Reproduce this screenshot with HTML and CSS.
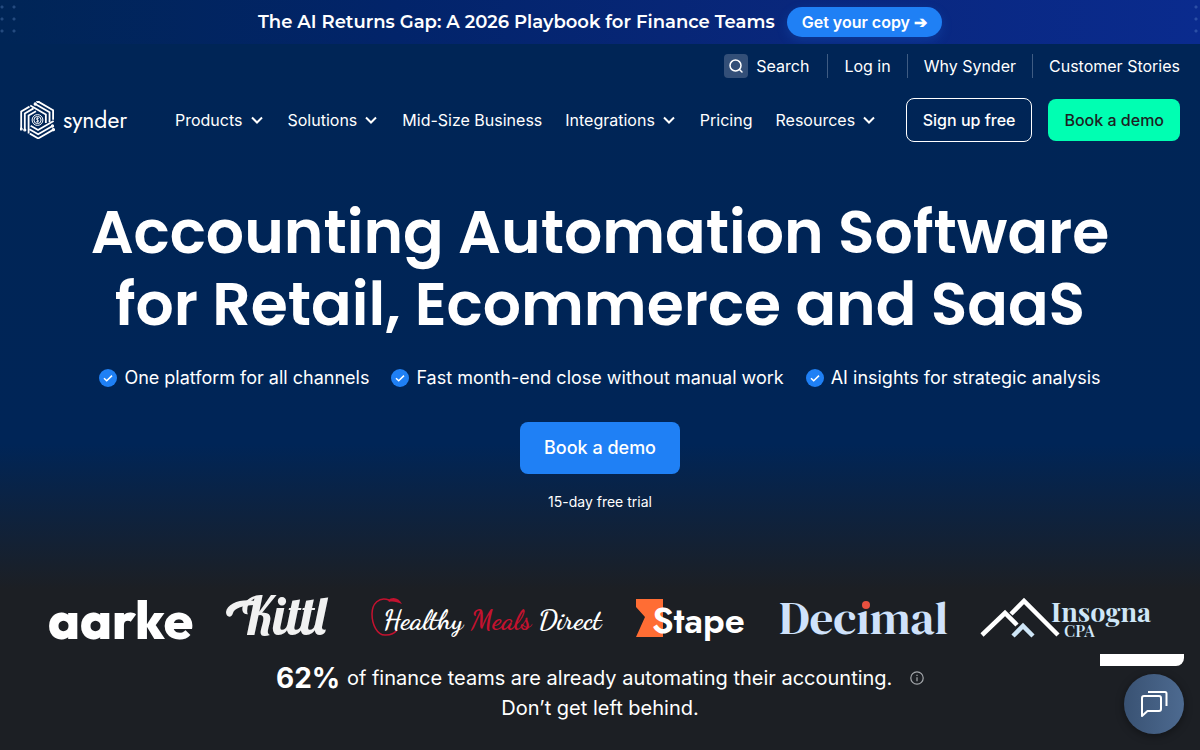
FILE: index.html
```html
<!DOCTYPE html>
<html lang="en">
<head>
  <meta charset="UTF-8">
  <meta name="viewport" content="width=device-width, initial-scale=1.0">
  <title>Synder - Accounting Automation Software</title>
  <link rel="stylesheet" href="styles.css">
</head>
<body>
  <div class="banner">
    <span class="banner-text">The AI Returns Gap: A 2026 Playbook for Finance Teams</span>
    <a href="#" class="banner-link">Get your copy ➔</a>
  </div>

  <div class="page">
    <header>
      <div class="topbar">
        <a href="#" class="search">
          <span class="search-icon">
            <svg width="16" height="16" viewBox="0 0 16 16" fill="none" stroke="#fff" stroke-width="1.5" stroke-linecap="round">
              <circle cx="7.5" cy="7.5" r="5.5"/>
              <path d="M11.5 11.5 14 14"/>
            </svg>
          </span>
          Search
        </a>
        <a href="#">Log in</a>
        <a href="#">Why Synder</a>
        <a href="#">Customer Stories</a>
      </div>

      <div class="navbar">
        <a href="#" class="logo">
          <svg width="35" height="38" viewBox="0 0 35 38" fill="none" stroke="#fff">
            <defs>
              <g id="arm">
                <path d="M1.2 28V10.4L9.5 5.6"/>
                <path d="M4.8 29V12.4L13.5 7.4"/>
                <path d="M8.6 32.5V14.5L16 10.2"/>
                <circle cx="1.2" cy="28" r=".7"/>
                <circle cx="4.8" cy="29" r=".7"/>
              </g>
            </defs>
            <g stroke-width="1.8">
              <use href="#arm"/>
              <use href="#arm" transform="rotate(120 17.5 19)"/>
              <use href="#arm" transform="rotate(240 17.5 19)"/>
            </g>
            <circle cx="17.5" cy="19" r="5.4" stroke-width="1"/>
            <circle cx="17.5" cy="19" r="3.6" stroke-width="1"/>
            <path d="M18.8 17.7c-.6-.8-2.6-.7-2.5.4.1 1.2 2.5.6 2.5 1.8 0 1-2 1.2-2.7.3M17.5 16.3v5.4" stroke-width=".8"/>
          </svg>
          <span>synder</span>
        </a>
        <nav>
          <a href="#">Products <svg class="chevron" viewBox="0 0 16 16"><path d="m3 5.5 5 5 5-5"/></svg></a>
          <a href="#">Solutions <svg class="chevron" viewBox="0 0 16 16"><path d="m3 5.5 5 5 5-5"/></svg></a>
          <a href="#">Mid-Size Business</a>
          <a href="#">Integrations <svg class="chevron" viewBox="0 0 16 16"><path d="m3 5.5 5 5 5-5"/></svg></a>
          <a href="#">Pricing</a>
          <a href="#">Resources <svg class="chevron" viewBox="0 0 16 16"><path d="m3 5.5 5 5 5-5"/></svg></a>
        </nav>
        <div class="actions">
          <button type="button" class="btn btn-outline">Sign up free</button>
          <button type="button" class="btn btn-green">Book a demo</button>
        </div>
      </div>
    </header>

    <main>
      <h1>Accounting Automation Software<br>for Retail, Ecommerce and SaaS</h1>
      <ul class="features">
        <li><svg class="check" viewBox="0 0 18 18"><circle cx="9" cy="9" r="9"/><path d="m5 9.2 2.7 2.6L13 6.6"/></svg>One platform for all channels</li>
        <li><svg class="check" viewBox="0 0 18 18"><circle cx="9" cy="9" r="9"/><path d="m5 9.2 2.7 2.6L13 6.6"/></svg>Fast month-end close without manual work</li>
        <li><svg class="check" viewBox="0 0 18 18"><circle cx="9" cy="9" r="9"/><path d="m5 9.2 2.7 2.6L13 6.6"/></svg>AI insights for strategic analysis</li>
      </ul>
      <button type="button" class="btn-main">Book a demo</button>
      <p class="trial">15-day free trial</p>

      <div class="clients">
        <svg width="144" height="46" viewBox="0 0 144 46">
          <text class="aarke" x="-1" y="43">aarke</text>
        </svg>
        <svg width="114" height="46" viewBox="0 0 114 46">
          <text class="kittl" x="17" y="39">Kittl</text>
          <path d="M31 5C17 2 2 7 1 16c0 6 6 6 7 1 1-4 9-8 22-8z" fill="#f1f1f1"/>
        </svg>
        <svg width="233" height="46" viewBox="0 0 233 46">
          <path d="M18 4C8 0 1 8 1 18c0 10 5 22 14 21 5 0 8-1 11-5" fill="none" stroke="#c4122f" stroke-width="1.5"/>
          <path d="M17 4c5-4 11-2 14 4-5-2-9-3-13-2z" fill="#c4122f"/>
          <text class="healthy" x="12" y="33">Healthy <tspan class="red">Meals</tspan> Direct</text>
        </svg>
        <svg width="112" height="46" viewBox="0 0 112 46">
          <path d="M0 3h27v38H0l9-20L0 11z" fill="#ff6d34"/>
          <text class="stape" x="16" y="37">Stape</text>
        </svg>
        <svg width="168" height="46" viewBox="0 0 168 46">
          <text class="decimal" x="-1" y="38">Decımal</text>
          <circle cx="86" cy="9" r="4" fill="#e8503f"/>
        </svg>
        <svg width="171" height="46" viewBox="0 0 171 46">
          <g fill="none" stroke-width="4.5">
            <path d="M2 39 25 17 37 29M31 18 44 5 78 39" stroke="#fff"/>
            <path d="M33 40 43 30 53 40" stroke="#cfe6f7"/>
          </g>
          <text class="insogna" x="71" y="26">Insogna</text>
          <text class="cpa" x="84" y="41">CPA</text>
        </svg>
      </div>

      <p class="stat">
        <strong>62%</strong> of finance teams are already automating their accounting.
        <svg class="info" viewBox="0 0 14 14"><circle cx="7" cy="7" r="6.2"/><path d="M7 6.3v4M7 3.7v1.2"/></svg>
        <br>Don’t get left behind.
      </p>
    </main>
  </div>

  <div class="chat">
    <div class="chat-hint"></div>
    <button type="button" class="chat-button" aria-label="Open chat">
      <svg width="30" height="30" viewBox="0 0 30 30" fill="none" stroke="#fff" stroke-width="2" stroke-linejoin="round">
        <path d="M5 7h15a2 2 0 0 1 2 2v11a2 2 0 0 1-2 2H8.5L3 27V9a2 2 0 0 1 2-2z"/>
        <path d="M9 3h17a1.5 1.5 0 0 1 1.5 1.5V17"/>
      </svg>
    </button>
  </div>
</body>
</html>
```
FILE: styles.css
```css
* {
  box-sizing: border-box;
}
body {
  margin: 0;
  font-family: Inter, "Liberation Sans", sans-serif;
  font-size: 16px;
  line-height: 24px;
  color: #fff;
  background-color: #1c1f24;
}
a {
  color: inherit;
  text-decoration: none;
}
button {
  font-family: inherit;
  cursor: pointer;
}
.banner {
  position: relative;
  display: flex;
  align-items: center;
  justify-content: center;
  gap: 12px;
  height: 44px;
  overflow: hidden;
  background: linear-gradient(90deg, #002556 0%, #02246a 33%, #09277c 66%, #0a2b8e 100%);
}
/* dotted corners */
.banner::before,
.banner::after {
  content: "";
  position: absolute;
  top: 1px;
  left: -4px;
  width: 24px;
  height: 36px;
  background: radial-gradient(circle, rgba(120, 160, 220, 0.3) 1px, transparent 2px) 0 0 / 12px 12px;
}
.banner::after {
  left: auto;
  right: -14px;
}
.banner-text {
  font-family: Montserrat, Inter, sans-serif;
  font-size: 18px;
  font-weight: 600;
}
.banner-link {
  padding: 3px 15px;
  border-radius: 15px;
  background-color: #1f80f5;
  font-weight: 600;
  box-shadow: 0 4px 12px rgba(31, 128, 245, 0.2);
}
.page {
  background: linear-gradient(#002556 0, #002557 400px, #1c1f24 545px);
}
.topbar {
  display: flex;
  justify-content: flex-end;
  padding: 10px 20px;
}
.topbar a {
  padding: 0 16px;
  border-left: 1px solid #3f5c83;
}
.topbar a:last-child {
  padding-right: 0;
}
.topbar .search {
  display: flex;
  gap: 8px;
  border-left: none;
  padding-right: 18px;
}
.search-icon {
  display: flex;
  align-items: center;
  justify-content: center;
  width: 24px;
  height: 24px;
  border-radius: 4px;
  background-color: #334f78;
}
.navbar {
  display: flex;
  align-items: center;
  padding: 10px 20px;
}
.logo {
  display: flex;
  align-items: center;
  gap: 8px;
  width: 107px;
  font-family: Jost, Poppins, sans-serif;
  font-size: 23px;
}
.logo svg {
  flex: none;
}
nav {
  display: flex;
  gap: 23px;
  margin-left: 48px;
}
nav a {
  display: flex;
  align-items: center;
  gap: 6px;
  white-space: nowrap;
}
.chevron {
  width: 16px;
  height: 16px;
  fill: none;
  stroke: #fff;
  stroke-width: 2;
}
.actions {
  display: flex;
  align-items: center;
  gap: 16px;
  margin-left: auto;
}
.btn {
  padding: 0 16px;
  border: none;
  border-radius: 8px;
  font-size: 16px;
  font-weight: 500;
  line-height: 42px;
  white-space: nowrap;
}
.btn-outline {
  border: 1px solid #fff;
  background: none;
  color: #fff;
}
.btn-green {
  background-color: #00ffb2;
  color: #1c1f24;
}
main {
  padding: 44px 20px 26px;
  text-align: center;
}
h1 {
  margin: 0;
  font-family: Poppins, Inter, sans-serif;
  font-size: 60px;
  font-weight: 600;
  line-height: 72px;
}
.features {
  display: flex;
  justify-content: center;
  gap: 22px;
  margin: 24px 0 30px;
  padding: 0;
  list-style: none;
  font-size: 18px;
  line-height: 28px;
}
.features li {
  display: flex;
  align-items: center;
  gap: 7px;
}
.check {
  width: 18px;
  height: 18px;
  fill: #1f80f5;
}
.check path {
  fill: none;
  stroke: #fff;
  stroke-width: 1.5;
}
.btn-main {
  padding: 0 24px;
  border: none;
  border-radius: 8px;
  background-color: #1f80f5;
  color: #fff;
  font-size: 18px;
  font-weight: 500;
  line-height: 52px;
}
.trial {
  margin: 16px 0 0;
  font-size: 14px;
}
.clients {
  display: flex;
  justify-content: center;
  gap: 32px;
  margin-top: 82px;
}
.clients svg {
  flex: none;
  overflow: visible;
}
.clients text {
  fill: #fff;
}
.clients .aarke {
  font: 800 53px Outfit, Poppins, Inter, sans-serif;
}
.clients .kittl {
  font: 400 52px Lobster, Pacifico, Lato, sans-serif;
  fill: #f1f1f1;
}
.clients .healthy {
  font: 700 28px Yellowtail, "Dancing Script", Lato, sans-serif;
}
.clients .red {
  fill: #c4122f;
}
.clients .stape {
  font: 600 36px Jost, Poppins, sans-serif;
}
.clients .decimal {
  font: 400 47px "DM Serif Display", "Playfair Display", "Liberation Serif", serif;
  fill: #cfe2fb;
}
.clients .insogna {
  font: 700 27px "Playfair Display", "Liberation Serif", serif;
  fill: #cfe6f7;
}
.clients .cpa {
  font: 600 16px "Playfair Display", "Liberation Serif", serif;
  fill: #cfe6f7;
}
.stat {
  margin: 21px 0 0;
  font-size: 20px;
  line-height: 30px;
}
.stat strong {
  margin-right: 1px;
  font-size: 28px;
  line-height: 28px;
  vertical-align: -3px;
}
.info {
  width: 14px;
  height: 14px;
  margin-left: 12px;
  fill: none;
  stroke: #a4a7ab;
  stroke-width: 1.2;
}
.chat {
  position: fixed;
  right: 16px;
  bottom: 16px;
  display: flex;
  flex-direction: column;
  align-items: flex-end;
  gap: 8px;
}
.chat-hint {
  width: 84px;
  height: 12px;
  border-bottom-right-radius: 8px;
  background-color: #fff;
}
.chat-button {
  display: flex;
  align-items: center;
  justify-content: center;
  width: 60px;
  height: 60px;
  padding: 0;
  border: none;
  border-radius: 50%;
  background: linear-gradient(90deg, #395273, #4d6a90);
  box-shadow: 0 2px 8px rgba(0, 0, 0, 0.4);
}
```
